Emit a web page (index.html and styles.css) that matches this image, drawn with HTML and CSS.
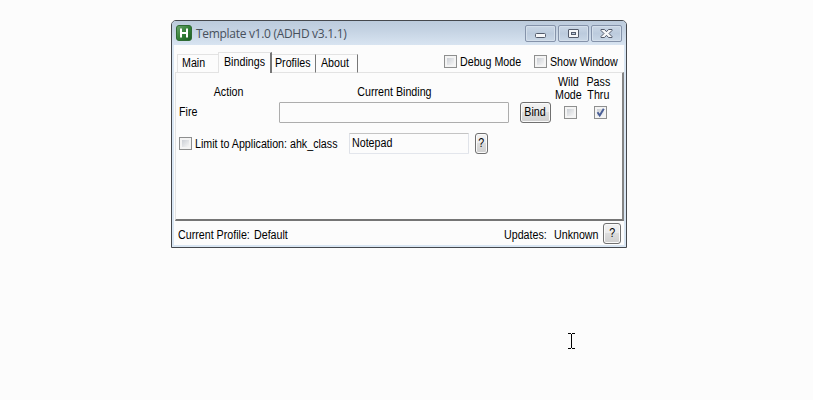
FILE: index.html
```
<!DOCTYPE html>
<html lang="en">
<head>
<meta charset="utf-8">
<title>Template v1.0 (ADHD v3.1.1)</title>
<link rel="stylesheet" href="styles.css">
</head>
<body>
<main class="window">
  <header class="titlebar">
    <svg class="logo" width="16" height="16" viewBox="0 0 16 16">
      <defs><linearGradient id="g" x1="0" y1="0" x2="1" y2="1"><stop offset="0" stop-color="#6fa871"/><stop offset=".5" stop-color="#348038"/><stop offset="1" stop-color="#1d5c23"/></linearGradient></defs>
      <rect x=".5" y=".5" width="15" height="15" rx="2.5" fill="url(#g)" stroke="#2e6b33"/>
      <path d="M5 3.500v9M11 3.500v9M5 8h6" stroke="#fff" stroke-width="2" fill="none"/>
    </svg>
    <h1 class="title">Template v1.0 (ADHD v3.1.1)</h1>
    <div class="controls">
      <button class="control" aria-label="Minimize"><svg width="13" height="11" viewBox="0 0 13 11"><rect x="1.500" y="5.500" width="10" height="4" rx="1" fill="#f6f7f9" stroke="#535b6b"/></svg></button>
      <button class="control" aria-label="Maximize"><svg width="13" height="11" viewBox="0 0 13 11"><rect x="1.500" y="1.500" width="10" height="8" rx=".5" fill="#f3f5f8" stroke="#535b6b"/><rect x="4.500" y="4.500" width="4" height="2" fill="#b8c8dc" stroke="#535b6b"/></svg></button>
      <button class="control" aria-label="Close"><svg width="13" height="11" viewBox="0 0 13 11"><path d="M1 1.500h3.500l2 2.200 2-2.200H12v1L9 5.500l3 3v1H8.500l-2-2.200-2 2.200H1v-1l3-3-3-3z" fill="#f6f7f9" stroke="#535b6b"/></svg></button>
    </div>
  </header>
  <div class="client">
    <div class="toolbar">
      <nav class="tabs">
        <div class="tab main"><span class="t">Main</span></div>
        <div class="tab active"><span class="t">Bindings</span></div>
        <div class="tab profiles"><span class="t">Profiles</span></div>
        <div class="tab about"><span class="t">About</span></div>
      </nav>
      <div class="option debug"><i class="check"></i><span class="t">Debug Mode</span></div>
      <div class="option show"><i class="check"></i><span class="t">Show Window</span></div>
    </div>
    <section class="panel">
      <div class="bindings headings">
        <span class="t action">Action</span>
        <span class="t current">Current Binding</span>
        <span class="t wild">Wild<br>Mode</span>
        <span class="t pass">Pass<br>Thru</span>
      </div>
      <div class="bindings">
        <span class="t fire">Fire</span>
        <div class="field binding"></div>
        <button class="button"><span class="t c">Bind</span></button>
        <i class="check"></i>
        <i class="check"><svg width="13" height="13" viewBox="0 0 13 13"><path d="M3.500 6.300L5.700 9.500 9.800 2.800" fill="none" stroke="#4a5f97" stroke-width="2"/></svg></i>
      </div>
      <div class="limit">
        <i class="check"></i>
        <span class="t">Limit to Application: ahk_class</span>
        <div class="field app"><span class="t">Notepad</span></div>
        <button class="button"><span class="t c">?</span></button>
      </div>
    </section>
    <footer class="status">
      <span class="t">Current Profile:</span>
      <span class="t">Default</span>
      <span class="t">Updates:</span>
      <span class="t">Unknown</span>
      <button class="button"><span class="t c">?</span></button>
    </footer>
  </div>
</main>
<svg class="cursor" width="7" height="16" viewBox="0 0 7 16"><path d="M0 .5h3M4 .5h3M3.500 1v14M0 15.500h3M4 15.500h3" stroke="#000" fill="none"/></svg>
</body>
</html>
```
FILE: styles.css
```
* { box-sizing: border-box; }
body {
  margin: 0;
  height: 400px;
  padding: 20px 0 0 171px;
  background: #fcfcfc;
  overflow: hidden;
  font: 12px/13px "Liberation Sans", Arial, sans-serif;
  color: #000;
}
.t {
  display: block;
  white-space: nowrap;
  transform: scaleX(.89);
  transform-origin: 0 50%;
}
.t.c { transform-origin: 50% 50%; }
.window {
  width: 456px;
  height: 228px;
  border: 1px solid #45484d;
  border-radius: 5px 5px 0 0;
  background: #d9e6f3;
  overflow: hidden;
}
.titlebar {
  display: flex;
  height: 24px;
  padding: 4px 4px 0 4px;
  background: linear-gradient(#bccbdc, #c5d3e3 40%, #d8e4f1);
}
.title {
  flex: 1;
  margin: 0 0 0 4px;
  font: 12px/17px "Open Sans", sans-serif;
  letter-spacing: -.3px;
  color: #47505c;
  white-space: nowrap;
}
.controls { display: flex; gap: 2px; }
.control {
  display: flex;
  align-items: center;
  justify-content: center;
  width: 31px;
  height: 17px;
  padding: 0;
  border: 1px solid #8593aa;
  border-radius: 2px;
  background: linear-gradient(#c9d6e5, #bccbdd 50%, #c9d7e6);
  box-shadow: inset 0 0 0 1px #d4dfeb;
}
.client {
  height: 200px;
  margin: 0 2px;
  background: #fcfcfc;
}
.toolbar { display: flex; height: 27px; padding-left: 3px; }
.tabs { display: flex; align-items: flex-end; width: 267px; height: 28px; }
.tab {
  height: 19px;
  padding: 2px 0 0 5px;
  border-top: 1px solid #e3e3e3;
  border-bottom: 1px solid #e3e3e3;
}
.tab.main { width: 41px; border-left: 1px solid #e3e3e3; padding-left: 4px; }
.tab.active {
  width: 54px;
  height: 21px;
  border-right: 2px solid #777;
  border-left: 1px solid #e3e3e3;
  border-bottom: 0;
  background: #fcfcfc;
}
.tab.active { padding: 3px 0 0 5px; }
.tab.profiles { width: 44px; padding-left: 3px; border-right: 1px solid #777; }
.tab.about { width: 42px; padding-left: 5px; border-right: 1px solid #777; }
.option { display: flex; gap: 3px; padding-top: 10px; width: 90px; }
.check {
  display: block;
  flex: none;
  width: 13px;
  height: 13px;
  border: 1px solid #8e8f8f;
  background: linear-gradient(135deg, #cbcfd5, #f6f6f6) content-box, #f4f4f4;
  padding: 2px;
}
.check svg { display: block; margin: -3px; }
.option .t { padding-top: 1px; }
.panel {
  height: 149px;
  margin-left: 1px;
  border: solid;
  border-width: 1px 2px 2px 1px;
  border-color: #e3e3e3 #858585 #757575 #e3e3e3;
}
.bindings {
  display: grid;
  grid-template-columns: 100px 230px 11px 31px 13px 13px 17px 13px;
  margin-left: 3px;
}
.headings { height: 29px; padding-top: 3px; }
.action { grid-column: 1; padding: 10px 0 0 39px; }
.current { grid-column: 2; padding: 10px 0 0 88px; }
.wild, .pass { width: 30px; text-align: center; }
.wild { grid-column: 6; margin-left: -9px; }
.pass { grid-column: 8; margin-left: -9px; }
.fire { padding-top: 4px; }
.field { height: 21px; border: 1px solid #adadad; border-radius: 1px; }
.button {
  display: flex;
  align-items: center;
  justify-content: center;
  height: 21px;
  padding: 0;
  border: 1px solid #707070;
  border-radius: 3px;
  background: linear-gradient(#f2f2f2, #ebebeb 49%, #ddd 50%, #cfcfcf);
  box-shadow: inset 0 0 0 1px #fafafa;
  font: inherit;
  color: #000;
}
.bindings .button { grid-column: 4; }
.bindings .check { grid-column: 6; margin-top: 4px; }
.bindings .check + .check { grid-column: 8; }
.limit {
  display: grid;
  grid-template-columns: 16px 154px 120px 6px 13px;
  margin: 10px 0 0 3px;
}
.limit > .check { margin-top: 4px; }
.limit > .t { padding-top: 5px; }
.app { border-color: #c4c4c4 #e0e3e9 #e3e6ec #dfe2e8; padding: 3px 0 0 2px; }
.limit .button { grid-column: 5; }
.status {
  display: grid;
  grid-template-columns: 76px 250px 50px 49px 18px;
  padding: 2px 0 0 4px;
}
.status > .t { padding-top: 6px; }
.cursor { position: absolute; left: 568px; top: 333px; }
```
